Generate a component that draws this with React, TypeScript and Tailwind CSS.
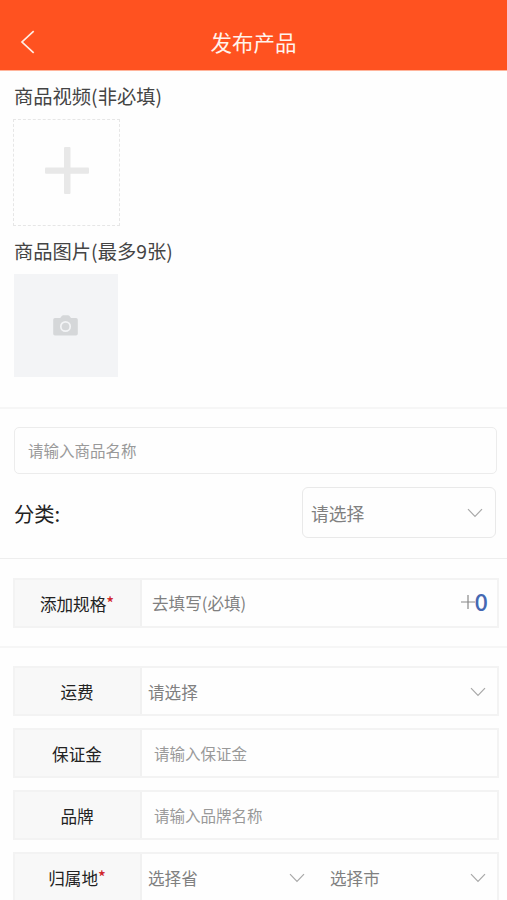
import type { ReactNode } from 'react'

function ChevronDown({ className = '' }: { className?: string }) {
  return (
    <svg
      width="16"
      height="10"
      viewBox="0 0 16 10"
      fill="none"
      stroke="#a8a8a8"
      strokeWidth="1.2"
      className={`shrink-0 ${className}`}
    >
      <path d="M1 1.2 8 8.3 15 1.2" />
    </svg>
  )
}

function FormRow({
  label,
  required,
  children,
}: {
  label: string
  required?: boolean
  children: ReactNode
}) {
  return (
    <div className="ml-[13px] flex h-[50px] w-[486px] shrink-0 border-2 border-[#f3f3f3] text-[16.6px]">
      <div className="flex w-[127px] shrink-0 items-center justify-center border-r-2 border-[#f1f1f1] bg-[#f8f8f8] pt-[2px] pr-px text-[#222]">
        {label}
        {required && (
          <span className="-mt-[5px] font-['Noto_Sans_CJK_SC'] text-[16px] leading-5 font-medium text-[#d0252b]">*</span>
        )}
      </div>
      <div className="flex min-w-0 flex-1 items-center pt-px text-[#808080]">{children}</div>
    </div>
  )
}

export default function App() {
  return (
    <div className="flex h-[900px] w-[507px] flex-col overflow-hidden bg-[#fefefe] font-['Noto_Sans_CJK_SC',sans-serif] leading-none">
      <header className="grid h-[71px] shrink-0 grid-cols-[1fr_auto_1fr] items-center border-b border-[#ffb49b] bg-[#ff5220] pt-[15px] text-white">
        <svg
          width="15"
          height="24"
          viewBox="0 0 15 24"
          fill="none"
          stroke="#ffeee4"
          strokeWidth="1.7"
          className="-mt-px ml-[20px]"
        >
          <path d="M13.7 1.2 2 12l11.7 10.8" />
        </svg>
        <h1 className="-mt-[2px] text-[21.5px] text-[#fff3ec]">发布产品</h1>
      </header>

      <section className="flex h-[336px] shrink-0 flex-col items-start pl-[14px] text-[19.3px] text-[#444]">
        <h2 className="mt-[15px] h-[20px] leading-[20px]">商品视频(非必填)</h2>
        <div className="mt-[13px] -ml-px flex size-[107px] items-center justify-center border border-dashed border-[#e6e6e6]">
          <svg width="44" height="47" viewBox="0 0 44 47" fill="#e8e8e8" className="-mt-[5px]">
            <rect x="19" width="6.5" height="47" rx="1" />
            <rect y="20.5" width="44" height="6.3" rx="1" />
          </svg>
        </div>
        <h2 className="mt-[15px] h-[20px] leading-[20px]">商品图片(最多9张)</h2>
        <div className="mt-[13px] flex h-[103px] w-[104px] items-center justify-center bg-[#f3f4f6]">
          <svg width="25" height="21" viewBox="0 0 25 21" className="-ml-px">
            <path
              d="M2 3h5.2L9 .8Q9.5.3 10.2.3h4.9q.7 0 1.2.5L18 3h5q1.8 0 1.8 1.8v13.9q0 1.8-1.8 1.8H2Q.2 20.5.2 18.7V4.8Q.2 3 2 3Z"
              fill="#d5d7d9"
            />
            <circle cx="12.5" cy="11.5" r="4.7" fill="none" stroke="#f3f4f6" strokeWidth="1.7" />
          </svg>
        </div>
      </section>

      <section className="h-[151px] shrink-0 border-t-2 border-[#f6f6f6] pr-[11px] pl-[14px]">
        <div className="mt-[18px] flex h-[47px] w-[483px] items-center rounded-[5px] border-[1.5px] border-[#ececec] pl-[13px] text-[15.5px] text-[#999]">
          请输入商品名称
        </div>
        <div className="mt-[13px] flex h-[51px] items-center justify-between">
          <span className="pt-[2px] text-[20.3px] text-[#222]">分类:</span>
          <div className="flex h-full w-[194px] items-center justify-between rounded-[6px] border border-[#e9e9e9] pr-[12px] pl-[8px] text-[17.8px] text-[#808080]">
            <span className="pt-[2px]">请选择</span>
            <ChevronDown />
          </div>
        </div>
      </section>

      <section className="h-[88px] shrink-0 border-t border-[#eee] pt-[19px]">
        <FormRow label="添加规格" required>
          <span className="-mt-px pl-[10px]">去填写(必填)</span>
          <svg
            width="14"
            height="14"
            viewBox="0 0 14 14"
            stroke="#888"
            strokeWidth="1.2"
            className="-mt-[3px] ml-auto"
          >
            <path d="M0 7h14M7 0v14" />
          </svg>
          <span className="-mt-[4px] mr-[9px] text-[23.5px] font-medium text-[#4568b2]">0</span>
        </FormRow>
      </section>

      <section className="flex shrink-0 flex-col gap-3 border-t-2 border-[#f6f6f6] pt-[18px]">
        <FormRow label="运费">
          <span className="pt-px pl-[6px]">请选择</span>
          <ChevronDown className="mr-[11px] ml-auto" />
        </FormRow>
        <FormRow label="保证金">
          <span className="pt-px pl-[12px] text-[15.5px] text-[#999]">请输入保证金</span>
        </FormRow>
        <FormRow label="品牌">
          <span className="pt-px pl-[12px] text-[15.5px] text-[#999]">请输入品牌名称</span>
        </FormRow>
        <FormRow label="归属地" required>
          <span className="w-[141px] pt-px pl-[6px]">选择省</span>
          <ChevronDown className="ml-[6px]" />
          <span className="ml-[25px] pt-px">选择市</span>
          <ChevronDown className="mr-[11px] ml-auto" />
        </FormRow>
      </section>
    </div>
  )
}
